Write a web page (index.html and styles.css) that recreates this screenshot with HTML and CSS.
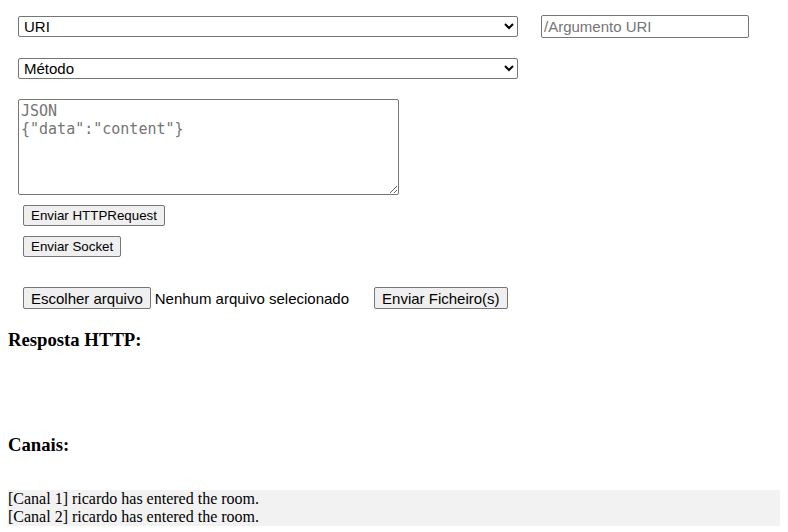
FILE: index.html
```html
<!DOCTYPE html>
<html>
<head>
<meta charset="utf-8">
<link rel="stylesheet" href="styles.css">
</head>
<body>
<div class="form">
  <div class="row">
    <select class="sel"><option>URI</option></select>
    <input class="arg" type="text" placeholder="/Argumento URI">
  </div>
  <div class="row">
    <select class="sel"><option>Método</option></select>
  </div>
  <div class="row">
    <textarea class="json" placeholder='JSON
{"data":"content"}'></textarea>
  </div>
  <div class="btns">
    <button class="btn">Enviar HTTPRequest</button>
    <button class="btn">Enviar Socket</button>
  </div>
  <div class="files">
    <button class="fbtn">Escolher arquivo</button><span class="fname">Nenhum arquivo selecionado</span>
    <button class="fbtn send">Enviar Ficheiro(s)</button>
  </div>
</div>
<h3 class="title">Resposta HTTP:</h3>
<div class="resp"></div>
<h3 class="title">Canais:</h3>
<div class="log">
  <div>[Canal 1] ricardo has entered the room.</div>
  <div>[Canal 2] ricardo has entered the room.</div>
</div>
</body>
</html>
```
FILE: styles.css
```css
html {
  overflow: hidden;
  scrollbar-width: none;
}
body {
  margin: 8px 8px 0;
  font-family: "Liberation Serif", serif;
  font-size: 16px;
}
.form {
  padding: 7px 10px 0;
}
.row {
  display: flex;
  align-items: center;
  margin-bottom: 20px;
}
.sel {
  width: 500px;
  height: 21px;
  font-family: "Liberation Sans", Arial, sans-serif;
  font-size: 15px;
  border: 1px solid #767676;
  border-radius: 2px;
  background: #fff;
  color: #000;
  padding: 0 1px;
}
.arg {
  margin-left: 23px;
  width: 208px;
  height: 23px;
  box-sizing: border-box;
  font-family: "Liberation Sans", Arial, sans-serif;
  font-size: 15px;
  border: 1px solid #767676;
  border-radius: 2px;
  padding: 1px 2px;
}
.arg::placeholder { color: #757575; }
.json {
  width: 381px;
  height: 96px;
  box-sizing: border-box;
  font-family: "DejaVu Sans Mono", monospace;
  font-size: 15px;
  line-height: 18px;
  border: 1px solid #767676;
  border-radius: 2px;
  padding: 2px 2px;
  margin-top: 0;
  resize: both;
}
.json::placeholder { color: #757575; }
.btns {
  display: flex;
  flex-direction: column;
  align-items: flex-start;
  gap: 10px;
  margin: -10px 0 0 5px;
}
.btn {
  font-family: "Liberation Sans", Arial, sans-serif;
  font-size: 13.33px;
  height: 21px;
  padding: 1px 7px;
  border: 1px solid #767676;
  border-radius: 2px;
  background: #efefef;
  color: #000;
}
.files {
  display: flex;
  align-items: center;
  margin: 30px 0 0 5px;
  font-family: "Liberation Sans", Arial, sans-serif;
  font-size: 15px;
}
.fbtn {
  font-family: "Liberation Sans", Arial, sans-serif;
  font-size: 15px;
  height: 22px;
  padding: 1px 7px;
  border: 1px solid #767676;
  border-radius: 2px;
  background: #efefef;
  color: #000;
}
.fname { margin-left: 4px; }
.send { margin-left: 25px; }
.title {
  font-size: 18.72px;
  font-weight: bold;
  margin: 20px 0 0;
}
.resp { height: 63px; }
.log {
  margin: 34px -8px 0 0;
  background: #f2f2f2;
  line-height: 18px;
}
```
